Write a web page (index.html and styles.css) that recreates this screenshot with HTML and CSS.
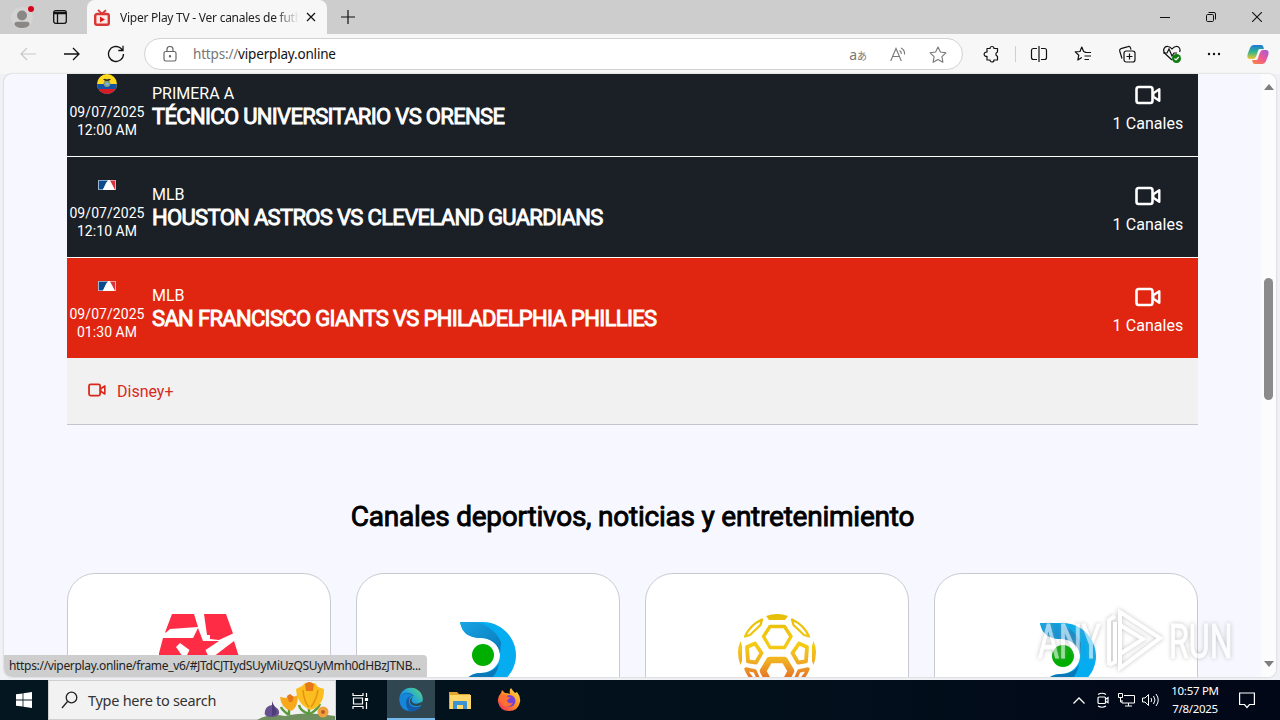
FILE: index.html
```
<!DOCTYPE html>
<html lang="es">
<head>
    <meta charset="UTF-8">
    <meta name="viewport" content="width=device-width, initial-scale=1.0">
    <title>Viper Play TV - Ver canales de futbol</title>
    <link rel="stylesheet" href="styles.css">
</head>
<body>

    <!-- Shared shapes -->
    <svg class="defs" width="0" height="0">
        <defs>
            <linearGradient id="gold" gradientUnits="userSpaceOnUse" x1="0" y1="0" x2="0" y2="78">
                <stop offset="0" stop-color="#e5bd08"/>
                <stop offset=".4" stop-color="#f5cb13"/>
                <stop offset=".6" stop-color="#f0b022"/>
                <stop offset=".85" stop-color="#e36a28"/>
            </linearGradient>
            <linearGradient id="fold" x1="0" y1="0" x2="1" y2="1">
                <stop offset="0" stop-color="#19a5e5"/>
                <stop offset="1" stop-color="#0878b8"/>
            </linearGradient>
            <linearGradient id="edge" x1="0" y1="1" x2="1" y2="0">
                <stop offset="0" stop-color="#0c59a4"/>
                <stop offset=".5" stop-color="#1b9de2"/>
                <stop offset="1" stop-color="#5fdc78"/>
            </linearGradient>
            <linearGradient id="fox" x1="1" y1="0" x2="0" y2="1">
                <stop offset="0" stop-color="#ffe847"/>
                <stop offset=".5" stop-color="#ff8a24"/>
                <stop offset="1" stop-color="#f0246b"/>
            </linearGradient>
            <linearGradient id="cop1" x1="0" y1="0" x2="0" y2="1">
                <stop offset="0" stop-color="#1b78dc"/>
                <stop offset=".5" stop-color="#35b58b"/>
                <stop offset="1" stop-color="#f5c52c"/>
            </linearGradient>
            <linearGradient id="cop2" x1="1" y1="0" x2="0" y2="1">
                <stop offset="0" stop-color="#a55ae0"/>
                <stop offset=".5" stop-color="#ee5a90"/>
                <stop offset="1" stop-color="#fb8a3c"/>
            </linearGradient>
            <symbol id="cam" viewBox="0 0 26 20">
                <rect x="1.5" y="2" width="16" height="16" rx="2.2" fill="none" stroke="currentColor" stroke-width="2.6"/>
                <path d="M18.300 8.2l6-4v11.6l-6-4z" fill="none" stroke="currentColor" stroke-width="2.4" stroke-linejoin="round"/>
            </symbol>
            <symbol id="mlb" viewBox="0 0 18 10">
                <rect width="18" height="10" rx="1" fill="#fff"/>
                <path d="M.6.6H10L8 3 5 9.4H.6z" fill="#0b4a8c"/>
                <path d="M12 .6h5.4v8.8h-.7L14.500 5z" fill="#d8343f"/>
                <path d="M5 9.5L7.500 5l1-2.500L11 1.500l1.800 1.600 1.400 2.600 2.300 3.700z" fill="#fff"/>
            </symbol>
            <symbol id="dsports" viewBox="0 0 58 78">
                <path d="M1 1h23c18 0 33 15 33 33S42 67 24 67H3c2-9 9-15 19-15 10 0 19-8 19-18s-8-17-19-17C10 17 3 12 1 1z" fill="#05adf0"/>
                <path d="M1 1h13c12 1 23 8 28 20l-1 12c-1-9-9-16-19-16C10 17 3 12 1 1z" fill="url(#fold)"/>
                <path d="M3 67c2-9 9-15 19-15 8 0 14-3 18-9-2 10-8 17-20 24z" fill="#0878b8"/>
                <circle cx="24" cy="34" r="11" fill="#00ae00"/>
            </symbol>
        </defs>
    </svg>

    <header class="tabs">
        <svg class="profile" width="24" height="26" viewBox="0 0 24 26">
            <circle cx="11" cy="14" r="11" fill="#d4d4d4"/>
            <circle cx="11" cy="11.500" r="5" fill="#8a8886"/>
            <path d="M3.500 20c0-2 2-2.200 4-2.200h7c2 0 4 .2 4 2.200 0 2.500-4 4-7.500 4s-7.500-1.500-7.500-4z" fill="#8a8886"/>
            <circle cx="20" cy="5" r="3" fill="#d9001b"/>
        </svg>
        <svg class="workspaces" width="14" height="14" viewBox="0 0 14 14" fill="none" stroke="#111" stroke-width="1.300">
            <rect x=".7" y=".7" width="12.600" height="12.600" rx="2"/>
            <path d="M1 2.500h12M1 3.500h12M4.500 4v9"/>
        </svg>
        <div class="tab">
            <svg width="16" height="17" viewBox="0 0 16 17">
                <path d="M4 .8l4 4 4-3.500" fill="none" stroke="#d93636" stroke-width="1.800"/>
                <rect x="1.200" y="5" width="13.600" height="10.800" rx="1.800" fill="#fbe9e5" stroke="#d93636" stroke-width="2.400"/>
                <path d="M6 7.500l5 3-5 3z" fill="#d92020"/>
            </svg>
            <span class="tab-title">Viper Play TV - Ver canales de futb</span>
            <svg width="10" height="10" viewBox="0 0 10 10" stroke="#111" stroke-width="1.200"><path d="M1 1l8 8M9 1L1 9"/></svg>
        </div>
        <svg class="new-tab" width="14" height="14" viewBox="0 0 14 14" stroke="#111" stroke-width="1.200"><path d="M7 0v14M0 7h14"/></svg>
        <div class="window-buttons">
            <svg width="10" height="10" viewBox="0 0 10 10" stroke="#111"><path d="M0 5.500h10"/></svg>
            <svg width="10" height="10" viewBox="0 0 10 10" fill="none" stroke="#111"><rect x=".5" y="2.500" width="7" height="7" rx="1.200"/><path d="M2.500.5H8A1.500 1.500 0 0 1 9.500 2v5.500"/></svg>
            <svg width="10" height="10" viewBox="0 0 10 10" stroke="#111" stroke-width="1.100"><path d="M0 0l10 10M10 0L0 10"/></svg>
        </div>
    </header>

    <nav class="toolbar">
        <svg class="back" width="16" height="14" viewBox="0 0 16 14" fill="none" stroke="#c8c8c8" stroke-width="1.200"><path d="M16 7H1M7 1L1 7l6 6"/></svg>
        <svg class="forward" width="16" height="14" viewBox="0 0 16 14" fill="none" stroke="#111" stroke-width="1.300"><path d="M0 7h15M9 1l6 6-6 6"/></svg>
        <svg class="reload" width="18" height="18" viewBox="0 0 18 18" fill="none" stroke="#111" stroke-width="1.300"><path d="M16.500 9A7.500 7.500 0 1 1 13.500 3l2 2M16 .8V5.500h-4.700"/></svg>
        <div class="address">
            <svg width="14" height="16" viewBox="0 0 14 16" fill="none" stroke="#666" stroke-width="1.200"><rect x="1" y="5.500" width="12" height="9.500" rx="1.800"/><path d="M4 5.500V3.500a3 3 0 0 1 6 0v2"/><circle cx="7" cy="10.200" r=".6" fill="#666"/></svg>
            <span class="url"><span class="scheme">https://</span>viperplay.online</span>
            <span class="translate">a<small>あ</small></span>
            <svg class="read" width="16" height="15" viewBox="0 0 16 15" fill="none" stroke="#777" stroke-width="1.100"><path d="M.7 14L6 1.500 11.300 14M2.600 9.500h6.800M9.500 3.500q2 1 1.800 3.500M11 1q4 2 3.500 6.500"/></svg>
            <svg class="star" width="18" height="17" viewBox="0 0 18 17" fill="none" stroke="#777" stroke-width="1.100" stroke-linejoin="round"><path d="M9 1l2.400 5 5.500.8-4 3.900 1 5.500L9 13.600l-4.900 2.600 1-5.500-4-3.900 5.500-.8z"/></svg>
        </div>
        <div class="tools">
            <svg width="18" height="18" viewBox="0 0 18 18" fill="none" stroke="#111" stroke-width="1.200" stroke-linejoin="round"><path d="M4 3.500h3a2 2 0 0 1 4 0h3.500V7l-.5.300a2.100 2.100 0 0 0 0 3.700l.5.500V15H11a2 2 0 0 1-4 0H4v-3.700a2.200 2.200 0 1 1 0-4.200z"/></svg>
            <i class="divider"></i>
            <svg width="18" height="18" viewBox="0 0 18 18" fill="none" stroke="#111" stroke-width="1.200"><path d="M9 1v16M7 3.500H3.500a2 2 0 0 0-2 2v7a2 2 0 0 0 2 2H7M11 3.500h3.500a2 2 0 0 1 2 2v7a2 2 0 0 1-2 2H11"/></svg>
            <svg width="18" height="18" viewBox="0 0 18 18" fill="none" stroke="#111" stroke-width="1.200" stroke-linejoin="round"><path d="M11.500 6.800L9.600 6.500 7.800 2 6 6.500l-4.800.4 3.600 3.300-1 4.800 4-2.500M10.500 7.500H17M10.500 11H17M10.500 14.500H15"/></svg>
            <svg width="18" height="18" viewBox="0 0 18 18" fill="none" stroke="#111" stroke-width="1.200"><path d="M4 13.500L1.700 6A2 2 0 0 1 3 3.600l7-2a2 2 0 0 1 2.500 1.300l.5 1.800"/><rect x="6" y="6" width="11" height="11" rx="2.200"/><path d="M11.500 8.500v6M8.500 11.500h6"/></svg>
            <svg width="20" height="20" viewBox="0 0 20 20" fill="none" stroke="#111" stroke-width="1.200"><path d="M10 16L3 9.500C0 6 2.500 2 6 2.500c2 .2 3.200 1.500 4 2.500.8-1 2-2.300 4-2.500 3-.3 5 2.500 3.600 5.500"/><path d="M1 9h4l2-4 3 7 2-3h3"/><circle cx="14.500" cy="14.500" r="4.500" fill="#107c10" stroke="none"/><path d="M12.500 14.500l1.500 1.500 2.700-3" stroke="#fff"/></svg>
            <svg width="14" height="4" viewBox="0 0 14 4" fill="#111"><circle cx="2" cy="2" r="1.200"/><circle cx="7" cy="2" r="1.200"/><circle cx="12" cy="2" r="1.200"/></svg>
            <svg class="copilot" width="22" height="21" viewBox="0 0 22 21"><path d="M7 1h7c2 0 2 1 3 4h-4c-2 0-2 2-3 5s-2 5-4 5H3C0 15 0 12 1 9l2-5c1-2 2-3 4-3z" fill="url(#cop1)"/><path d="M15 20H8c-2 0-2-1-3-4h4c2 0 2-2 3-5s2-5 4-5h3c3 0 3 3 2 6l-2 5c-1 2-2 3-4 3z" fill="url(#cop2)"/></svg>
        </div>
    </nav>

    <main class="viewport">
        <div class="page">
            <section class="events">
                <div class="event">
                    <div class="when">
                        <svg width="20" height="20" viewBox="0 0 20 20"><circle cx="10" cy="10" r="10" fill="#ffda1f"/><path d="M0 10h20a10 10 0 0 1-20 0z" fill="#1452a5"/><path d="M1.500 15h17A10 10 0 0 1 1.500 15z" fill="#d91a25"/><circle cx="10" cy="9.500" r="3.400" fill="#8a9b75"/><circle cx="10" cy="10" r="1.800" fill="#72b9df"/><path d="M6 5.500q2-1.500 4 0 2-1.500 4 0l-2.500 1.500h-3z" fill="#3b2d23"/></svg>
                        <p>09/07/2025<br>12:00 AM</p>
                    </div>
                    <div class="match">
                        <p>PRIMERA A</p>
                        <h2>TÉCNICO UNIVERSITARIO VS ORENSE</h2>
                    </div>
                    <div class="count"><svg width="26" height="20"><use href="#cam"/></svg><p>1 Canales</p></div>
                </div>
                <div class="event">
                    <div class="when">
                        <svg width="18" height="20"><use href="#mlb"/></svg>
                        <p>09/07/2025<br>12:10 AM</p>
                    </div>
                    <div class="match">
                        <p>MLB</p>
                        <h2>HOUSTON ASTROS VS CLEVELAND GUARDIANS</h2>
                    </div>
                    <div class="count"><svg width="26" height="20"><use href="#cam"/></svg><p>1 Canales</p></div>
                </div>
                <div class="event open">
                    <div class="when">
                        <svg width="18" height="20"><use href="#mlb"/></svg>
                        <p>09/07/2025<br>01:30 AM</p>
                    </div>
                    <div class="match">
                        <p>MLB</p>
                        <h2>SAN FRANCISCO GIANTS VS PHILADELPHIA PHILLIES</h2>
                    </div>
                    <div class="count"><svg width="26" height="20"><use href="#cam"/></svg><p>1 Canales</p></div>
                </div>
                <a class="channel" href="#"><svg width="18" height="14"><use href="#cam"/></svg>Disney+</a>
            </section>

            <h3 class="heading">Canales deportivos, noticias y entretenimiento</h3>

            <section class="cards">
                <div class="card">
                    <svg class="america" width="80" height="70" viewBox="0 0 80 70" fill="#ff2c45">
                        <path d="M13 0h22l4 13-28 2-4 3.500H6z"/>
                        <path d="M45 0h22l7 19.500L60 26l-9-1v-4h-3z"/>
                        <path d="M39 14l5 13h16L46.500 36l4 9H26l4.500-9L21 29l-4 4 7 10H-1l5-19h30z"/>
                        <path d="M75 27l5 16H54z"/>
                    </svg>
                </div>
                <div class="card"><svg class="ds" width="58" height="78"><use href="#dsports"/></svg></div>
                <div class="card">
                    <svg class="ball" width="78" height="78" viewBox="0 0 78 78" fill="none" stroke="url(#gold)" stroke-width="3.400" stroke-linejoin="round">
                        <path d="M28 2q11-4 22 0l-3 4H31z" fill="url(#gold)" stroke="none"/>
                        <path d="M32 12.500h14.500L53 22.500l-6.500 11H32L25.500 22.500z"/>
                        <path d="M24 5.500L22.500 11 12 21 7 22.500Q12 11 24 5.500zM54 5.500L55.500 11 66 21l5 1.500Q66 11 54 5.500z" stroke-width="2.300"/>
                        <path d="M17 29.500L23.500 39 18 48.500l-8-1.200L9 33zM61 29.500L54.500 39 60 48.500l8-1.200L69 33z" stroke-width="3.800"/>
                        <path d="M2.500 27q-5 11 0 24l1.500-4V32zM75.500 27q5 11 0 24L74 47V32z" fill="url(#gold)" stroke="none"/>
                        <path d="M31.500 46h15L53 57l-6.500 12h-15L25 57z" stroke-width="6.500"/>
                        <path d="M8 55l9 2 4 9-3 2q-7-5-10-13zM70 55l-9 2-4 9 3 2q7-5 10-13z"/>
                    </svg>
                </div>
                <div class="card"><svg class="ds last" width="58" height="78"><use href="#dsports"/></svg></div>
            </section>
        </div>
        <div class="scrollbar">
            <svg width="10" height="6" viewBox="0 0 10 6"><path d="M0 6l5-6 5 6z" fill="#7e7e7e"/></svg>
            <div class="thumb"></div>
            <svg width="10" height="6" viewBox="0 0 10 6"><path d="M0 0h10L5 6z" fill="#7e7e7e"/></svg>
        </div>
        <div class="status">https://viperplay.online/frame_v6/#JTdCJTIydSUyMiUzQSUyMmh0dHBzJTNB...</div>
        <div class="watermark">
            <span>ANY</span>
            <svg width="60" height="66" viewBox="0 0 60 66" fill="none" stroke="#fff" stroke-width="4"><path d="M15 4l40 26-40 30zM4 57V12l6-4M15 46l23-15-23-14M4 57l6-3V14"/></svg>
            <span>RUN</span>
        </div>
    </main>

    <footer class="taskbar">
        <div class="start"><svg width="16" height="16" viewBox="0 0 16 16" fill="#fff"><path d="M0 2.300l6.600-.9v6.200H0zM7.400 1.300L16 0v7.600H7.400zM0 8.400h6.600v6.200L0 13.700zM7.400 8.400H16V16l-8.600-1.300z"/></svg></div>
        <div class="search">
            <svg width="17" height="18" viewBox="0 0 17 18" fill="none" stroke="#222" stroke-width="1.300"><circle cx="10.500" cy="6.500" r="5.300"/><path d="M6.500 10.500L1 17"/></svg>
            <span>Type here to search</span>
            <svg class="flowers" width="80" height="39" viewBox="0 0 80 39">
                <path d="M2 39q12-7 28-4 20-5 50 0v4z" fill="#6f8f5e"/>
                <path d="M34 34V24M54 33V17M34 34q-7-5-8-8M54 33q-9-3-10-9M55 33q8-5 10-10" stroke="#5b9a3c" stroke-width="2.400" fill="none"/>
                <path d="M17 19q0 5 6 9 4 7-6 8-9 0-7-6 1-5 7-6z" fill="#67508f"/>
                <path d="M17 21v14q7-2 3-8z" fill="#4b3b76"/>
                <path d="M25 16l6 1 3-3 4 2 5-2q0 13-7 16-10-3-11-14z" fill="#f8a91b"/>
                <path d="M41 8l6-3 3-3 5 2 5-2 3 4 6 2q0 18-14 21Q42 23 41 8z" fill="#fbbd20"/>
                <path d="M50 3q4-4 9 0l-1 7h-7zM32 15l3-2 4 3-2 5h-3z" fill="#e6781b"/>
                <path d="M48 9q1 12 6 17M63 9q-2 11-7 17" stroke="#e49312" stroke-width="1.500" fill="none"/>
                <circle cx="68" cy="31" r="5.500" fill="#efa13e"/><circle cx="68" cy="31" r="2" fill="#b95b20"/>
            </svg>
        </div>
        <div class="app tasks"><svg width="17" height="17" viewBox="0 0 17 17" fill="none" stroke="#fff" stroke-width="1.200"><path d="M1 1v2.500h10V1M1 17v-2.500h10V17M1.500 6h9v6h-9zM14.500 1v4M14.500 10v7"/><path d="M13.500 6.500h2v2h-2z" fill="#fff"/></svg></div>
        <div class="app active"><svg width="24" height="25" viewBox="0 0 24 25"><circle cx="12" cy="12.500" r="11.800" fill="url(#edge)"/><path d="M1 10q7-8 14-1-6 0-5 7 2 6 12 3-4 6-11 5.500Q-1 23 1 10z" fill="#115ba8"/><path d="M1 10Q8 3 14 9q-7 0-7 7 0 4 3 8Q-1 22 1 10z" fill="#1687d8"/><path d="M14 9.500q-3 4 0 6.500 5 2 10-2l-1 4q-6 2-10 0-5-4 1-8.500z" fill="#304650"/></svg></div>
        <div class="app"><svg width="22" height="19" viewBox="0 0 22 19"><path d="M0 1h8l2 2h11v15H0z" fill="#e5a52d"/><path d="M1 4h21v14H1z" fill="#ffd76a"/><path d="M4 18v-7q0-1 1-1h12q1 0 1 1v7h-4v-4H8v4z" fill="#3b94d1"/></svg></div>
        <div class="app"><svg width="24" height="24" viewBox="0 0 24 24"><path d="M14 0q2 3 4 5l2-1q4 5 3 10-2 9-11 9T1 14q-1-5 3-9l1-3 3 3q3 0 5 1-1-4 1-6z" fill="url(#fox)"/><circle cx="12.500" cy="13" r="6" fill="#7542d8"/><path d="M3 8q4-3 8 1l3 1q-4 1-4 3 1 3 6 2-4 6-10 2Q2 13 3 8z" fill="#ff7132"/></svg></div>
        <div class="tray">
            <svg width="12" height="7" viewBox="0 0 12 7" fill="none" stroke="#fff" stroke-width="1.300"><path d="M.5 6.500L6 1l5.500 5.500"/></svg>
            <svg width="14" height="16" viewBox="0 0 14 16" fill="none" stroke="#fff" stroke-width="1.200"><rect x="2" y="5" width="7.500" height="6.500" rx="1"/><path d="M10 7l2-1.300v5L10 9.500M2 2.500Q6 0 10 2.500M2 14q4 2.500 8 0"/></svg>
            <svg width="17" height="14" viewBox="0 0 17 14" fill="none" stroke="#fff"><path d="M6 2.500h10.500v7.500H4V7M7 13h7M10.500 10v3M.5.5h4v4h-4zM2.500 4.500V9H4"/></svg>
            <svg width="17" height="14" viewBox="0 0 17 14" fill="none" stroke="#fff"><path d="M.5 5H3l3.500-3.500v11L3 9H.5zM9 5q1.500 2 0 4M11.500 3q3 4 0 8M14 1q4.500 6 0 12"/></svg>
            <div class="clock">10:57 PM<br>7/8/2025</div>
            <svg width="16" height="17" viewBox="0 0 16 17" fill="none" stroke="#fff" stroke-width="1.200"><path d="M.6 1h14.800v11.500H10.500L8 15.500l-2.500-3H.6z"/></svg>
        </div>
    </footer>

</body>
</html>
```
FILE: styles.css
```
* {
    box-sizing: border-box;
}

body {
    margin: 0;
    width: 1280px;
    height: 720px;
    overflow: hidden;
    display: flex;
    flex-direction: column;
    background-color: #f0f1f4;
    font-family: Roboto, Arial, sans-serif;
}

svg {
    display: block;
    flex: none;
}

p, h2, h3 {
    margin: 0;
    font-weight: 400;
}

.defs {
    position: absolute;
}

/* browser frame */
.tabs {
    height: 34px;
    flex: none;
    display: flex;
    align-items: center;
    background-color: #cdcdcd;
    font-family: "Noto Sans", sans-serif;
}

.profile {
    margin-left: 11px;
}

.workspaces {
    margin-left: 18px;
}

.tab {
    align-self: stretch;
    width: 240px;
    margin-left: 20px;
    padding: 0 11px 0 7px;
    display: flex;
    align-items: center;
    border-radius: 8px 8px 0 0;
    background-color: #f7f7f7;
}

.tab-title {
    width: 181px;
    margin: 0 5px 0 10px;
    white-space: nowrap;
    font-size: 12px;
    letter-spacing: -0.25px;
    color: #222;
    -webkit-mask-image: linear-gradient(to right, #000 155px, transparent 179px);
    mask-image: linear-gradient(to right, #000 155px, transparent 179px);
}

.new-tab {
    margin-left: 14px;
}

.window-buttons {
    margin-left: auto;
    margin-right: 18px;
    display: flex;
    gap: 36px;
}

.toolbar {
    height: 40px;
    flex: none;
    display: flex;
    align-items: center;
    background-color: #f7f7f7;
}

.back {
    margin-left: 20px;
}

.forward {
    margin-left: 28px;
}

.reload {
    margin-left: 27px;
}

.address {
    width: 819px;
    height: 32px;
    margin-left: 19px;
    padding: 0 15px 0 18px;
    display: flex;
    align-items: center;
    border: 1px solid #d2d2d2;
    border-radius: 16px;
    background-color: #fff;
    font-family: "Noto Sans", sans-serif;
}

.url {
    margin-left: 16px;
    font-size: 13.5px;
    letter-spacing: -0.18px;
    color: #111;
}

.scheme {
    color: #767676;
}

.translate {
    margin-left: auto;
    font-size: 14px;
    color: #777;
    font-family: "Noto Sans", "Noto Sans CJK JP", sans-serif;
}

.translate small {
    font-size: 10px;
}

.read {
    margin-left: 23px;
}

.star {
    margin-left: 23px;
}

.tools {
    flex: 1;
    padding: 0 11px 0 20px;
    display: flex;
    align-items: center;
    justify-content: space-between;
}

.divider {
    width: 1px;
    height: 16px;
    margin: 0 -11px 0 -12px;
    background-color: #d0d0d0;
}

/* page */
.viewport {
    position: relative;
    height: 603px;
    margin: 0 4px;
    flex: none;
    display: flex;
    overflow: hidden;
    border-radius: 8px;
    background-color: #f7f8ff;
    box-shadow: 0 0 2px #b8b8b8;
}

.page {
    width: 1257px;
    padding: 0 63px;
    overflow: hidden;
}

.events {
    margin-top: -18px;
}

.event {
    height: 101px;
    display: flex;
    border-bottom: 1px solid #fff;
    background-color: #1b1f26;
    color: #fff;
}

.event.open {
    height: 100px;
    border-bottom: 0;
    background-color: #e02611;
}

.when {
    width: 80px;
    padding-top: 18px;
    display: flex;
    flex-direction: column;
    align-items: center;
    text-align: center;
    font-size: 14px;
    line-height: 18px;
}

.when p {
    margin-top: 9px;
    letter-spacing: 0.06px;
}

.match {
    padding: 28px 0 0 5px;
}

.match p {
    font-size: 16px;
    line-height: 19px;
}

.match h2 {
    font-size: 22px;
    line-height: 27px;
    letter-spacing: -0.67px;
    -webkit-text-stroke: 0.9px #fff;
}

.count {
    margin-left: auto;
    width: 100px;
    padding-top: 29px;
    display: flex;
    flex-direction: column;
    align-items: center;
}

.count p {
    margin-top: 9px;
    font-size: 16px;
    line-height: 19px;
    letter-spacing: 0.06px;
}

.channel {
    height: 67px;
    padding-left: 21px;
    display: flex;
    align-items: center;
    gap: 11px;
    border-bottom: 1px solid #c4c5c9;
    background-color: #f1f1f1;
    color: #d82a1c;
    font-size: 16px;
    text-decoration: none;
}

.channel svg {
    margin-bottom: 2px;
}

.heading {
    margin-top: 75px;
    text-align: center;
    font-size: 28px;
    line-height: 34px;
    letter-spacing: -0.23px;
    color: #000;
    -webkit-text-stroke: 0.9px #000;
}

.cards {
    margin-top: 39px;
    display: grid;
    grid-template-columns: repeat(4, 264px);
    gap: 25px;
}

.card {
    height: 264px;
    padding-top: 40px;
    display: flex;
    justify-content: center;
    border: 1px solid #c9cad1;
    border-radius: 28px;
    background-color: #fff;
}

.ds {
    margin-top: 7px;
}

.ds.last {
    margin: 8px 0 0 4px;
}

.scrollbar {
    width: 15px;
    padding: 10px 0;
    display: flex;
    flex-direction: column;
    align-items: center;
    background-color: #fcfcfc;
}

.thumb {
    width: 9px;
    height: 122px;
    margin: 188px 0 auto;
    border-radius: 5px;
    background-color: #8b8b8b;
}

.status {
    position: absolute;
    left: 0;
    bottom: 0;
    width: 423px;
    height: 22px;
    padding-left: 5px;
    border-radius: 0 4px 0 8px;
    background-color: #cecece;
    font-family: "Noto Sans", sans-serif;
    font-size: 12px;
    line-height: 21px;
    letter-spacing: -0.32px;
    white-space: nowrap;
    color: #222;
}

.watermark {
    position: absolute;
    left: 1034px;
    top: 534px;
    display: flex;
    align-items: center;
    gap: 4px;
    color: #fff;
    font-size: 48px;
    opacity: 0.6;
    filter: drop-shadow(0 0 2px #999);
}

.watermark span {
    width: 63px;
    transform: scaleX(0.67);
    transform-origin: left;
    -webkit-text-stroke: 1px #fff;
}

/* taskbar */
.taskbar {
    height: 40px;
    margin-top: auto;
    flex: none;
    display: flex;
    background: linear-gradient(to right, #04161f, #02101c 60%, #020718);
    color: #fff;
    font-family: "Noto Sans", sans-serif;
}

.start, .app {
    width: 48px;
    display: flex;
    align-items: center;
    justify-content: center;
}

.app {
    width: 49px;
}

.app.tasks {
    width: 51px;
    padding-right: 3px;
}

.app.active {
    width: 48px;
    border-bottom: 2px solid #76b9ed;
    background-color: #304650;
}

.search {
    width: 288px;
    padding-left: 12px;
    display: flex;
    align-items: center;
    border: 1px solid #cfcfcf;
    background-color: #f2f2f2;
    color: #333;
    font-size: 14.5px;
}

.search span {
    margin-left: 10px;
    letter-spacing: -0.28px;
}

.flowers {
    margin-left: auto;
}

.tray {
    margin-left: auto;
    padding-right: 25px;
    display: flex;
    align-items: center;
    gap: 11px;
}

.tray svg:nth-child(3) {
    margin-left: -3px;
}

.tray svg:nth-child(4) {
    margin-left: -4px;
}

.clock {
    width: 50px;
    text-align: center;
    font-size: 11.5px;
    line-height: 18px;
    letter-spacing: -0.3px;
    white-space: nowrap;
}

.clock + svg {
    margin-left: 8px;
}
```
